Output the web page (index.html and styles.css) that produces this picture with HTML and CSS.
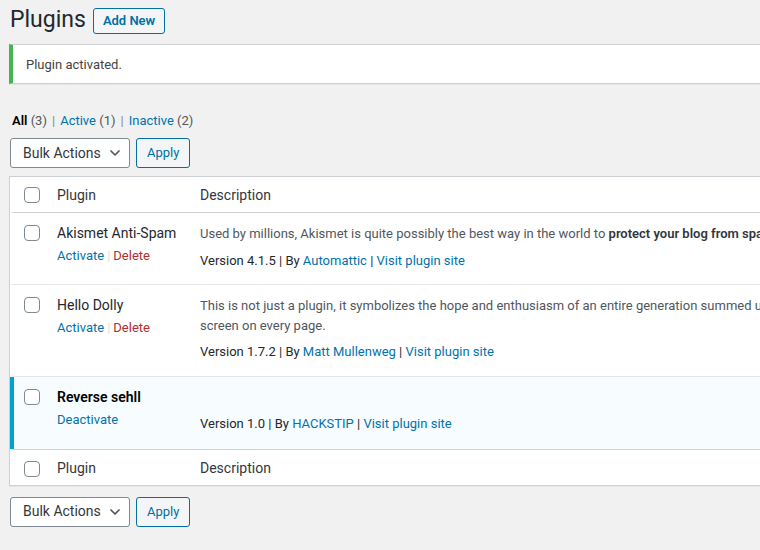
FILE: index.html
```html
<!DOCTYPE html>
<html lang="en">
<head>
<meta charset="utf-8">
<title>Plugins</title>
<link rel="stylesheet" href="styles.css">
</head>
<body>
<div class="wrap">
  <div class="title-row">
    <h1 class="title">Plugins</h1>
    <a class="page-title-action" href="#">Add New</a>
  </div>

  <div class="notice"><p>Plugin activated.</p></div>

  <ul class="views">
    <li class="current">All <span class="count">(3)</span></li>
    <li class="sep">|</li>
    <li><a href="#">Active <span class="count-link">(1)</span></a></li>
    <li class="sep">|</li>
    <li><a href="#">Inactive <span class="count-link">(2)</span></a></li>
  </ul>

  <div class="tablenav tablenav-top">
    <div class="select">
      <span>Bulk Actions</span>
      <svg class="chev" width="10" height="6" viewBox="0 0 10 6"><polyline points="1,1 5,5 9,1" fill="none" stroke="#50575e" stroke-width="1.7" stroke-linecap="round" stroke-linejoin="round"/></svg>
    </div>
    <button class="button" type="button">Apply</button>
  </div>

  <div class="plugins">
    <div class="row head">
      <div class="check"><input type="checkbox" class="cb"></div>
      <div class="col-name">Plugin</div>
      <div class="col-desc">Description</div>
    </div>

    <div class="row inactive">
      <div class="check"><input type="checkbox" class="cb"></div>
      <div class="col-name">
        <div class="plugin-title">Akismet Anti-Spam</div>
        <div class="row-actions"><a href="#">Activate</a><span class="rsep">|</span><a href="#" class="delete">Delete</a></div>
      </div>
      <div class="col-desc">
        <p class="desc">Used by millions, Akismet is quite possibly the best way in the world to <strong>protect your blog from spam</strong>. It keeps your site protected even while you sleep. To get started: activate the Akismet plugin and then go to your Akismet Settings page to set up your API key.</p>
        <div class="meta">Version 4.1.5 | By <a href="#">Automattic</a> | <a href="#">Visit plugin site</a></div>
      </div>
    </div>

    <div class="row inactive">
      <div class="check"><input type="checkbox" class="cb"></div>
      <div class="col-name">
        <div class="plugin-title">Hello Dolly</div>
        <div class="row-actions"><a href="#">Activate</a><span class="rsep">|</span><a href="#" class="delete">Delete</a></div>
      </div>
      <div class="col-desc">
        <p class="desc">This is not just a plugin, it symbolizes the hope and enthusiasm of an entire generation summed up in two words sung most famously by Louis Armstrong: Hello, Dolly. When activated you will randomly see a lyric from Hello, Dolly in the upper right of your admin<br>screen on every page.</p>
        <div class="meta">Version 1.7.2 | By <a href="#">Matt Mullenweg</a> | <a href="#">Visit plugin site</a></div>
      </div>
    </div>

    <div class="row active">
      <div class="check"><input type="checkbox" class="cb"></div>
      <div class="col-name">
        <div class="plugin-title strong">Reverse sehll</div>
        <div class="row-actions"><a href="#">Deactivate</a></div>
      </div>
      <div class="col-desc">
        <p class="desc">&nbsp;</p>
        <div class="meta">Version 1.0 | By <a href="#">HACKSTIP</a> | <a href="#">Visit plugin site</a></div>
      </div>
    </div>

    <div class="row foot">
      <div class="check"><input type="checkbox" class="cb"></div>
      <div class="col-name">Plugin</div>
      <div class="col-desc">Description</div>
    </div>
  </div>

  <div class="tablenav tablenav-bottom">
    <div class="select">
      <span>Bulk Actions</span>
      <svg class="chev" width="10" height="6" viewBox="0 0 10 6"><polyline points="1,1 5,5 9,1" fill="none" stroke="#50575e" stroke-width="1.7" stroke-linecap="round" stroke-linejoin="round"/></svg>
    </div>
    <button class="button" type="button">Apply</button>
  </div>
</div>
</body>
</html>
```

FILE: styles.css
```css
html, body {
  margin: 0;
  overflow: hidden;
}

body {
  background: #f1f1f1;
  color: #444;
  font-family: Roboto, "Liberation Sans", sans-serif;
  font-size: 13px;
  line-height: 1.5;
}

a {
  color: #0073aa;
  text-decoration: none;
}

.wrap {
  padding-left: 9px;
  width: 1400px;
}

.title-row {
  display: flex;
  align-items: center;
  gap: 7px;
  padding-top: 5px;
}

.title {
  margin: 0;
  font-size: 23px;
  font-weight: 400;
  line-height: 30px;
  color: #23282d;
  padding-left: 1px;
}

.page-title-action {
  margin-top: 2px;
  padding: 3px 9px;
  border: 1px solid #0071a1;
  border-radius: 3px;
  background: #f3f5f6;
  color: #0071a1;
  font-weight: 600;
  font-size: 13px;
  line-height: 18px;
}

.notice {
  margin-top: 9px;
  background: #fff;
  border: 1px solid #ccd0d4;
  border-left: 4px solid #46b450;
  box-shadow: 0 1px 1px rgba(0, 0, 0, .04);
  padding: 10px 13px 8px;
}

.notice p {
  margin: 0;
  line-height: 20px;
}

.views {
  margin: 27px 0 0;
  padding: 0 0 0 3px;
  list-style: none;
  display: flex;
  gap: 4px;
  line-height: 20px;
  color: #555;
}

.views .current {
  color: #000;
  font-weight: 600;
}

.views .count {
  font-weight: 400;
  color: #555;
}

.views .count-link {
  color: #555;
}

.views .sep {
  color: #888;
  padding: 0 1px;
}

.tablenav {
  display: flex;
  gap: 6px;
  padding-left: 1px;
}

.tablenav-top {
  margin-top: 7px;
}

.tablenav-bottom {
  margin-top: 11px;
}

.select {
  box-sizing: border-box;
  width: 120px;
  height: 30px;
  display: flex;
  align-items: center;
  justify-content: space-between;
  padding: 0 9px 0 12px;
  background: #fff;
  border: 1px solid #7e8993;
  border-radius: 3px;
  font-size: 14px;
  color: #32373c;
}

.chev {
  display: block;
}

.button {
  box-sizing: border-box;
  height: 30px;
  padding: 0 10px;
  margin: 0;
  border: 1px solid #0071a1;
  border-radius: 3px;
  background: #f3f5f6;
  color: #0071a1;
  font-family: inherit;
  font-size: 13px;
  line-height: 28px;
}

.plugins {
  margin-top: 8px;
  background: #fff;
  border: 1px solid #ccd0d4;
  box-shadow: 0 1px 1px rgba(0, 0, 0, .04);
}

.row {
  display: grid;
  grid-template-columns: 33px 143px 1fr;
  border-left: 4px solid transparent;
}

.check {
  padding-left: 10px;
}

.cb {
  appearance: none;
  -webkit-appearance: none;
  display: block;
  box-sizing: border-box;
  width: 16px;
  height: 16px;
  margin: 0;
  background: #fff;
  border: 1px solid #7e8993;
  border-radius: 4px;
}

.col-name {
  padding-left: 10px;
}

.col-desc {
  padding-left: 10px;
}

.head,
.foot {
  font-size: 14px;
  color: #32373c;
  line-height: 19px;
}

.head {
  border-bottom: 1px solid #ccd0d4;
}

.head .check {
  padding-top: 10px;
}

.head .col-name,
.head .col-desc {
  padding-top: 9px;
  padding-bottom: 7px;
}

.foot {
  border-top: 1px solid #ccd0d4;
}

.foot .check {
  padding-top: 11px;
}

.foot .col-name,
.foot .col-desc {
  padding-top: 9px;
  padding-bottom: 7px;
}

.inactive {
  border-bottom: 1px solid #e5e5e5;
}

.active {
  background: #f7fcfe;
  border-left-color: #00a0d2;
}

.inactive .check,
.active .check {
  padding-top: 12px;
}

.plugin-title {
  padding-top: 10px;
  font-size: 14px;
  line-height: 21px;
  color: #23282d;
}

.plugin-title.strong {
  font-weight: 600;
  color: #000;
}

.row-actions {
  padding-top: 2px;
  color: #ccc;
}

.rsep {
  padding: 0 3px;
  color: #ddd;
}

.row-actions .delete {
  color: #b32d2e;
}

.inactive .col-desc,
.active .col-desc {
  padding-top: 11px;
  padding-bottom: 14px;
}

.active .col-desc {
  padding-bottom: 15px;
}

.desc {
  margin: 0 0 7px;
  white-space: nowrap;
  color: #50575e;
}

.desc strong {
  font-weight: 600;
  color: #32373c;
}

.meta {
  color: #23282d;
  white-space: nowrap;
}
```
